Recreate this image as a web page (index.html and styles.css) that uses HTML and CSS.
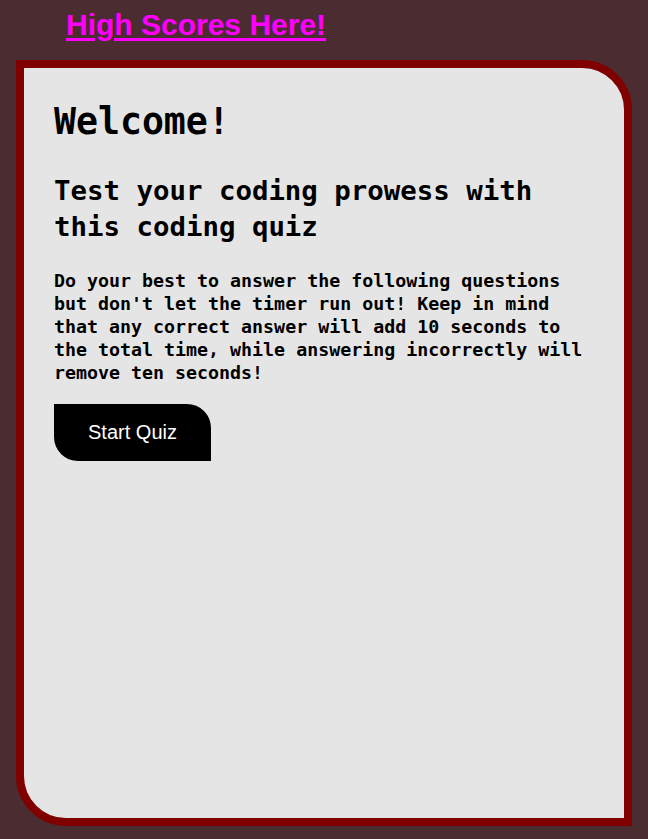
FILE: index.html
```html
<!DOCTYPE html>
<html lang="en">
<head>
<meta charset="utf-8">
<title>Coding Quiz</title>
<link rel="stylesheet" href="styles.css">
</head>
<body>
<header class="top">
  <a class="scores-link" href="#">High Scores Here!</a>
</header>
<main class="card">
  <h1 class="title">Welcome!</h1>
  <h2 class="subtitle">Test your coding prowess with this coding quiz</h2>
  <p class="intro">Do your best to answer the following questions but don't let the timer run out! Keep in mind that any correct answer will add 10 seconds to the total time, while answering incorrectly will remove ten seconds!</p>
  <button class="start-btn" type="button">Start Quiz</button>
</main>
</body>
</html>
```
FILE: styles.css
```css
html, body {
  margin: 0;
  padding: 0;
}
body {
  background: #4b2c30;
  font-family: "DejaVu Sans Mono", "Liberation Mono", monospace;
  height: 839px;
  overflow: hidden;
}
.top {
  height: 60px;
  padding-left: 66px;
  box-sizing: border-box;
}
.scores-link {
  display: inline-block;
  font-family: "Liberation Sans", Arial, sans-serif;
  font-weight: bold;
  font-size: 30px;
  line-height: 50px;
  color: #ff00ff;
  text-decoration: underline;
  text-decoration-thickness: 3px;
  text-underline-offset: 3px;
}
.card {
  margin: 0 16px;
  height: 766px;
  box-sizing: border-box;
  background: #e5e5e5;
  border: 8px solid #800000;
  border-radius: 0 50px 0 50px;
  padding: 32px 30px 0 30px;
  color: #000;
}
.title {
  margin: 0;
  font-size: 36.5px;
  line-height: 44px;
  font-weight: bold;
}
.subtitle {
  margin: 29px 0 0 0;
  font-size: 27.4px;
  line-height: 36px;
  font-weight: bold;
}
.intro {
  margin: 24px 0 0 0;
  font-size: 18.3px;
  line-height: 23px;
  font-weight: bold;
}
.start-btn {
  margin-top: 20px;
  width: 157px;
  height: 57px;
  border: none;
  background: #000;
  color: #fff;
  font-family: "Liberation Sans", Arial, sans-serif;
  font-size: 20px;
  border-radius: 0 24px 0 24px;
  padding: 0;
  cursor: pointer;
}
```
